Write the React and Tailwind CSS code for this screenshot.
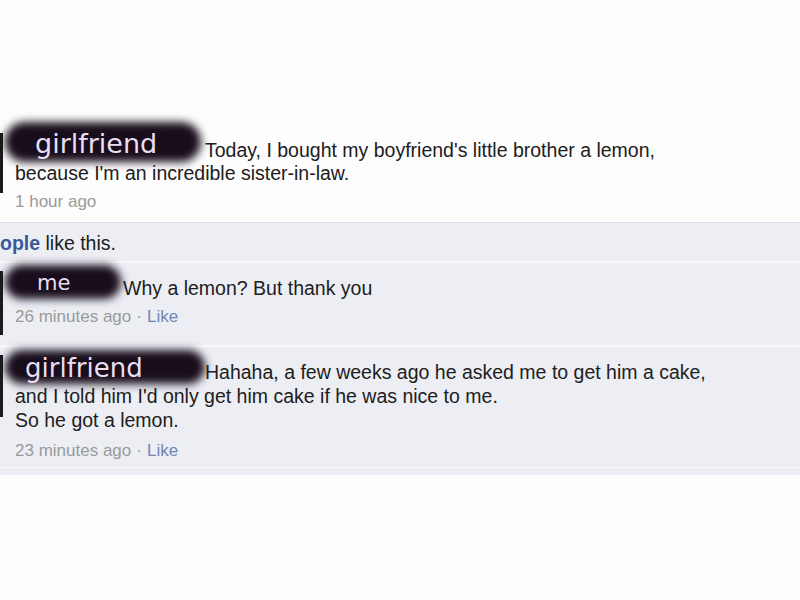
import React from "react";

const body = { fontFamily: '"Liberation Sans", Arial, sans-serif' };
const scribbleFont = { fontFamily: '"DejaVu Sans", sans-serif' };

function Scribble({ name, blob, text }) {
  return (
    <>
      <span className={`absolute rounded-full bg-[#180d1b] blur-[4px] ${blob}`} />
      <span className={`absolute leading-none text-[#e9def2] ${text}`} style={scribbleFont}>
        {name}
      </span>
    </>
  );
}

function Avatar({ className }) {
  return (
    <div className="w-[3px] shrink-0">
      <div className={`w-[3px] bg-[#1b1b1d] ${className}`} />
    </div>
  );
}

function Meta({ time, like }) {
  return (
    <p className="text-[17px] leading-[20px] text-[#9a9a9a]">
      {time}
      {like && (
        <>
          <span className="mx-[5px]">·</span>
          <span className="text-[#7185b5]">Like</span>
        </>
      )}
    </p>
  );
}

export default function App() {
  return (
    <div className="w-[800px] h-[600px] bg-[#fdfdfd] text-[#202020] overflow-hidden" style={body}>
      <div className="h-[124px]" />

      {/* Post */}
      <div className="flex h-[99px] border-b border-[#dcdfe7]">
        <Avatar className="mt-[9px] h-[60px]" />
        <div className="pl-[12px] pt-[15px]">
          <p className="relative text-[19.5px] leading-[23px]">
            <Scribble
              name="girlfriend"
              blob="-left-[10px] -top-[17px] w-[196px] h-[40px]"
              text="left-[20px] -top-[9px] text-[27px]"
            />
            <span className="inline-block w-[190px]" />
            <span className="relative">Today, I bought my boyfriend's little brother a lemon,</span>
            <br />
            because I'm an incredible sister-in-law.
          </p>
          <div className="mt-[7px]">
            <Meta time="1 hour ago" />
          </div>
        </div>
      </div>

      <div className="bg-[#eceef4]">
        {/* Likes */}
        <div className="h-[40px] pt-[9px] border-b-2 border-[#f7f8fb]">
          <p className="text-[19.5px] leading-[23px]">
            <span className="font-bold text-[#3b5998]">ople</span> like this.
          </p>
        </div>

        {/* Comment 1 */}
        <div className="flex h-[84px] border-b-2 border-[#f7f8fb]">
          <Avatar className="mt-[8px] h-[64px]" />
          <div className="pl-[12px] pt-[14px]">
            <p className="relative text-[19.5px] leading-[23px]">
              <Scribble
                name="me"
                blob="-left-[10px] -top-[12px] w-[116px] h-[34px]"
                text="left-[22px] -top-[4px] text-[21px]"
              />
              <span className="inline-block w-[108px]" />
              <span className="relative">Why a lemon? But thank you</span>
            </p>
            <div className="mt-[7px]">
              <Meta time="26 minutes ago" like />
            </div>
          </div>
        </div>

        {/* Comment 2 */}
        <div className="flex h-[121px] border-b border-[#f7f8fb]">
          <Avatar className="mt-[8px] h-[62px]" />
          <div className="pl-[12px] pt-[13px]">
            <p className="relative text-[19.5px] leading-[24px]">
              <Scribble
                name="girlfriend"
                blob="-left-[10px] -top-[10px] w-[200px] h-[34px]"
                text="left-[10px] -top-[5px] text-[26px]"
              />
              <span className="inline-block w-[190px]" />
              <span className="relative">Hahaha, a few weeks ago he asked me to get him a cake,</span>
              <br />
              and I told him I'd only get him cake if he was nice to me.
              <br />
              So he got a lemon.
            </p>
            <div className="mt-[9px]">
              <Meta time="23 minutes ago" like />
            </div>
          </div>
        </div>
        <div className="h-[7px]" />
      </div>
    </div>
  );
}
